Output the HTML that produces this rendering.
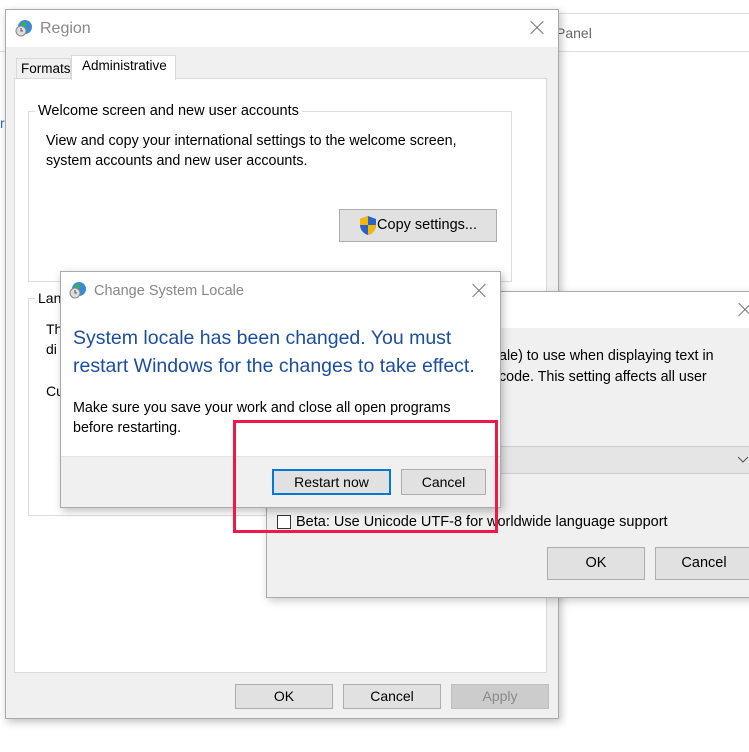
<!DOCTYPE html>
<html><head><meta charset="utf-8"><style>
*{box-sizing:border-box;margin:0;padding:0}
body{width:749px;height:752px;background:#fff;position:relative;overflow:hidden;font-family:"Liberation Sans",sans-serif;color:#000}
.a{position:absolute}
.t{position:absolute;white-space:nowrap;font-size:14px;line-height:16px}
.btn{position:absolute;background:#e1e1e1;border:1px solid #adadad;font-size:14px;text-align:center;line-height:22px}
.x{position:absolute;width:14px;height:14px}
.x:before,.x:after{content:"";position:absolute;left:-2px;top:6px;width:18px;height:1px;background:#777;transform:rotate(45deg)}
.x:after{transform:rotate(-45deg)}
</style></head><body>
<div class="a" style="left:558px;top:13px;width:191px;height:1px;background:#ddd"></div>
<div class="a" style="left:558px;top:51px;width:191px;height:1px;background:#ddd"></div>
<div class="t" style="left:556px;top:25px;color:#666;font-size:14px">Panel</div>
<div class="a" style="left:0;top:51px;width:6px;height:1px;background:#ddd"></div>
<div class="t" style="left:0;top:115px;color:#2a6ebb">r</div>

<div class="a" style="left:5px;top:9px;width:554px;height:710px;background:#f0f0f0;border:1px solid #aaa;box-shadow:2px 3px 8px rgba(0,0,0,.25)"></div>
<div class="a" style="left:6px;top:10px;width:552px;height:37px;background:#fff"></div>
<svg class="a" style="left:14px;top:18px" width="20" height="20" viewBox="0 0 20 20"><circle cx="11" cy="9" r="7" fill="#3a8ad6"/><path d="M7 5q3-2 6 1-1 3-4 2z" fill="#3ab34a"/><circle cx="7" cy="13" r="5" fill="#ddd" stroke="#888"/><path d="M7 10v3h2" stroke="#555" fill="none"/></svg>
<div class="t" style="left:40px;top:20px;font-size:16px;line-height:18px;color:#888">Region</div>
<div class="x" style="left:530px;top:21px"></div>
<div class="a" style="left:16px;top:58px;width:55px;height:21px;background:#f0f0f0;border:1px solid #d9d9d9"></div>
<div class="t" style="left:21px;top:61px;font-size:13.5px">Formats</div>
<div class="a" style="left:14px;top:78px;width:533px;height:595px;background:#fff;border:1px solid #d9d9d9"></div>
<div class="a" style="left:71px;top:55px;width:105px;height:25px;background:#fff;border:1px solid #d9d9d9;border-bottom:none"></div>
<div class="t" style="left:82px;top:58px;font-size:13.5px">Administrative</div>
<div class="a" style="left:28px;top:111px;width:484px;height:171px;border:1px solid #dcdcdc"></div>
<div class="t" style="left:35px;top:103px;background:#fff;padding:0 3px;font-size:14.5px">Welcome screen and new user accounts</div>
<div class="t" style="left:46px;top:133px;font-size:14.3px">View and copy your international settings to the welcome screen,</div>
<div class="t" style="left:46px;top:153px;font-size:14.3px">system accounts and new user accounts.</div>
<div class="btn" style="left:339px;top:209px;width:158px;height:33px;line-height:31px;padding-left:18px;font-size:14.5px">Copy settings...</div>
<svg class="a" style="left:358px;top:215px" width="20" height="21" viewBox="0 0 20 21"><path d="M10 1L2 4v6c0 5 4 9 8 10 4-1 8-5 8-10V4z" fill="#2a62c9"/><path d="M10 1v9H2V4zM10 10h8c0 5-4 9-8 10z" fill="#f5b700"/></svg>
<div class="a" style="left:28px;top:298px;width:484px;height:218px;border:1px solid #dcdcdc"></div>
<div class="t" style="left:35px;top:290px;background:#fff;padding:0 3px">Lan</div>
<div class="t" style="left:46px;top:321px">Th</div>
<div class="t" style="left:46px;top:341px">di</div>
<div class="t" style="left:46px;top:383px">Cu</div>
<div class="btn" style="left:235px;top:684px;width:98px;height:25px">OK</div>
<div class="btn" style="left:343px;top:684px;width:98px;height:25px">Cancel</div>
<div class="btn" style="left:451px;top:684px;width:98px;height:25px;background:#ccc;border-color:#bfbfbf;color:#8a8a8a">Apply</div>

<div class="a" style="left:266px;top:291px;width:490px;height:307px;background:#f0f0f0;border:1px solid #aaa;box-shadow:2px 3px 8px rgba(0,0,0,.2)"></div>
<div class="a" style="left:267px;top:292px;width:490px;height:36px;background:#fff"></div>
<div class="x" style="left:738px;top:303px"></div>
<div class="t" style="left:499px;top:348px;font-size:14.3px">ale) to use when displaying text in</div>
<div class="t" style="left:499px;top:369px;font-size:14.3px">code. This setting affects all user</div>
<div class="a" style="left:480px;top:446px;width:280px;height:28px;background:#e5e5e5;border:1px solid #ccc"></div>
<svg class="a" style="left:737px;top:456px" width="12" height="8"><path d="M1 1l5 5 5-5" stroke="#555" fill="none"/></svg>
<div class="a" style="left:277px;top:515px;width:14px;height:14px;background:#fff;border:1px solid #333"></div>
<div class="t" style="left:296px;top:514px;font-size:14.5px">Beta: Use Unicode UTF-8 for worldwide language support</div>
<div class="btn" style="left:547px;top:547px;width:98px;height:33px;line-height:31px;font-size:14.5px">OK</div>
<div class="btn" style="left:655px;top:547px;width:98px;height:33px;line-height:31px;font-size:14.5px">Cancel</div>

<div class="a" style="left:60px;top:271px;width:441px;height:237px;background:#f0f0f0;border:1px solid #aaa;box-shadow:2px 3px 8px rgba(0,0,0,.25)"></div>
<div class="a" style="left:61px;top:272px;width:439px;height:185px;background:#fff;border-bottom:1px solid #e3e3e3"></div>
<svg class="a" style="left:68px;top:280px" width="20" height="20" viewBox="0 0 20 20"><circle cx="11" cy="9" r="7" fill="#3a8ad6"/><path d="M7 5q3-2 6 1-1 3-4 2z" fill="#3ab34a"/><circle cx="7" cy="13" r="5" fill="#ddd" stroke="#888"/><path d="M7 10v3h2" stroke="#555" fill="none"/></svg>
<div class="t" style="left:94px;top:283px;color:#888;font-size:14.5px">Change System Locale</div>
<div class="x" style="left:472px;top:284px"></div>
<div class="t" style="left:73px;top:326px;font-size:19.5px;line-height:24px;color:#1c4ea0">System locale has been changed. You must</div>
<div class="t" style="left:73px;top:354px;font-size:19.5px;line-height:24px;color:#1c4ea0">restart Windows for the changes to take effect.</div>
<div class="t" style="left:73px;top:400px;font-size:14.3px">Make sure you save your work and close all open programs</div>
<div class="t" style="left:73px;top:420px;font-size:14.3px">before restarting.</div>
<div class="btn" style="left:272px;top:469px;width:119px;height:26px;border:2px solid #0078d7;line-height:22px">Restart now</div>
<div class="btn" style="left:401px;top:469px;width:85px;height:26px;line-height:24px">Cancel</div>

<div class="a" style="left:233px;top:420px;width:265px;height:113px;border:3px solid #ec1a4b"></div>
</body></html>
